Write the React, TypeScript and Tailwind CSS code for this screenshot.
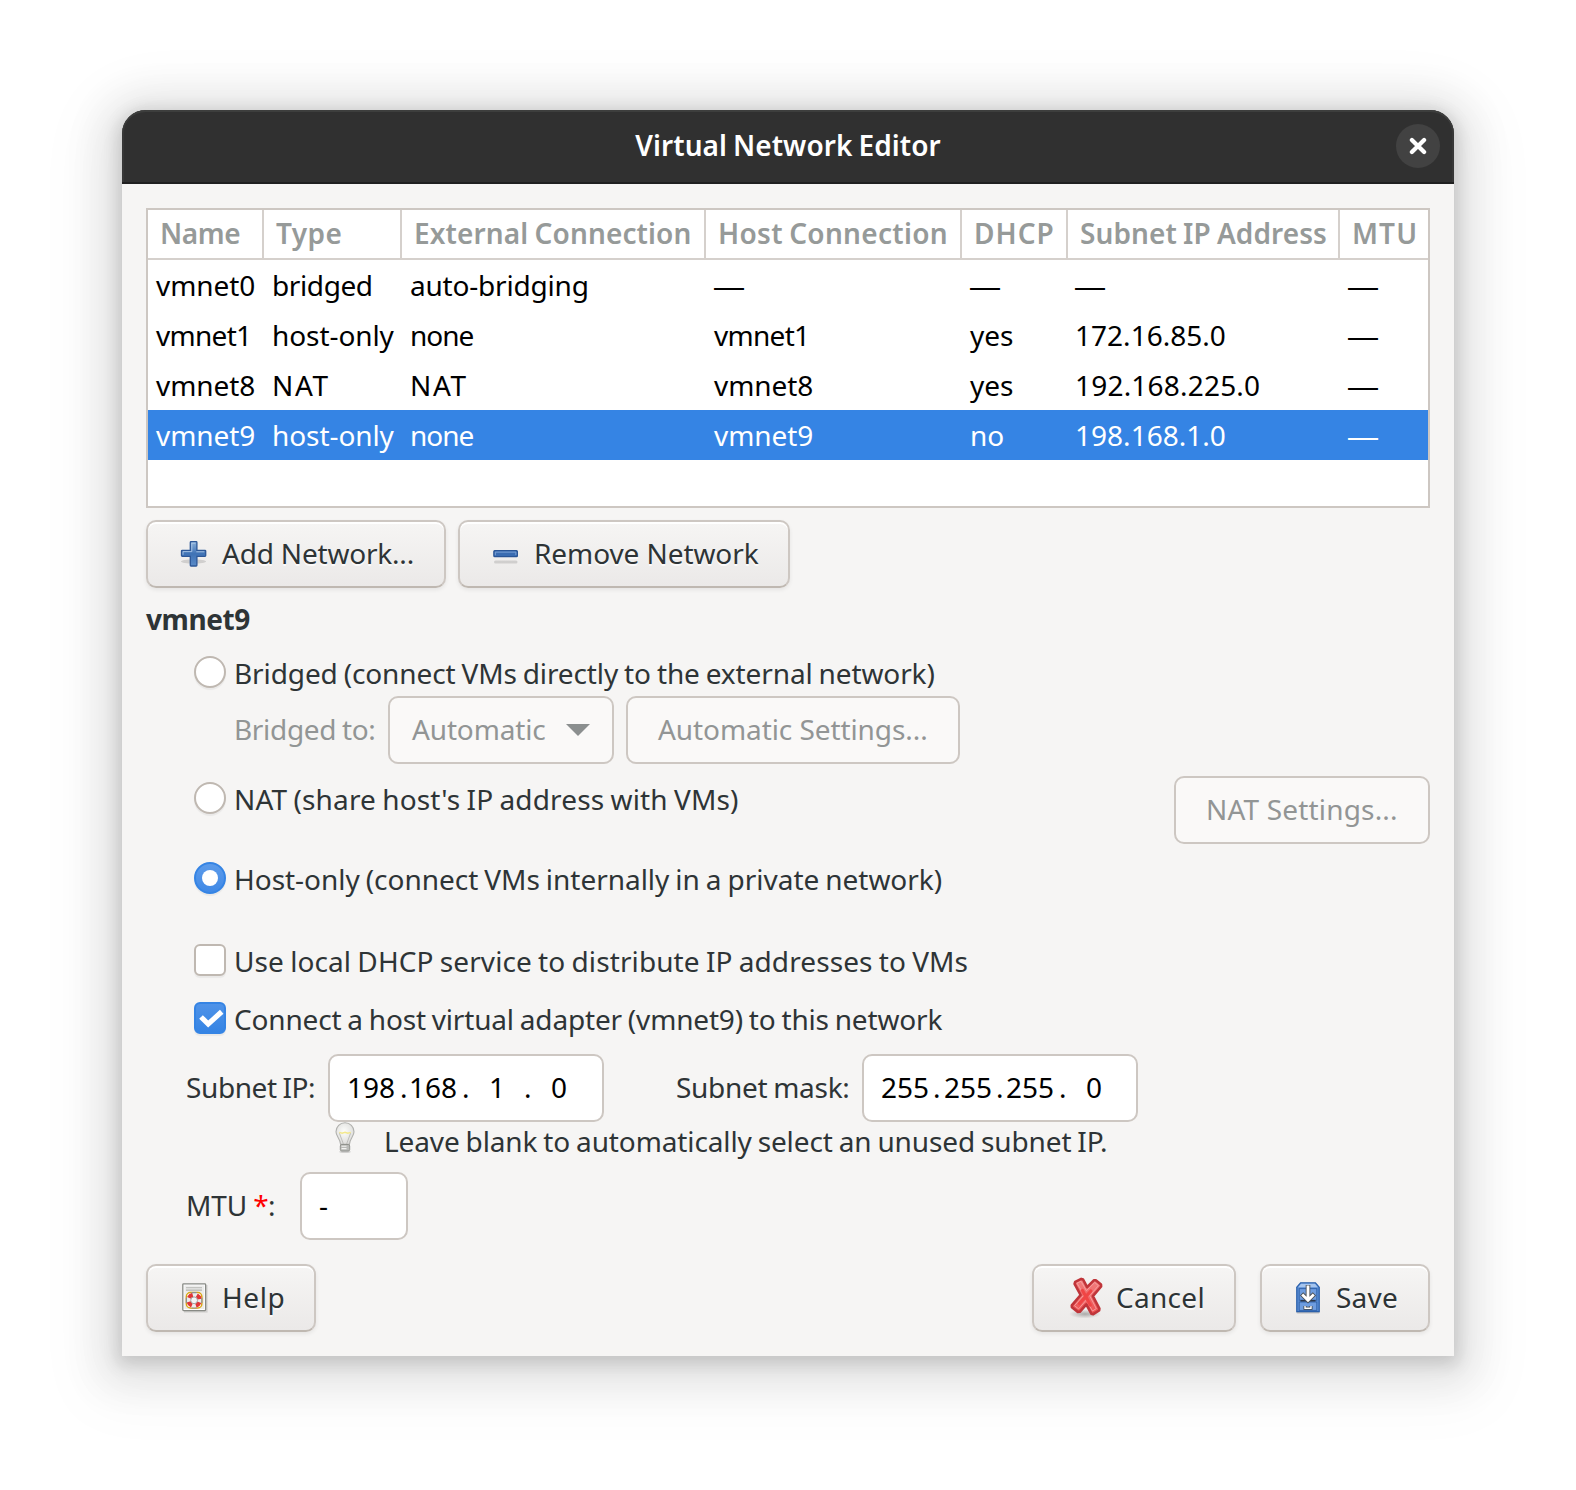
import type { ReactNode } from "react";

const cols = "grid grid-cols-[116px_138px_304px_256px_106px_272px_88px]";

const headers = [
  { text: "Name", cls: "pl-[12px] tracking-[-0.4px]" },
  { text: "Type", cls: "pl-[12px] tracking-[0.4px]" },
  { text: "External Connection", cls: "pl-[12px] tracking-[0.12px]" },
  { text: "Host Connection", cls: "pl-[12px] tracking-[0.3px]" },
  { text: "DHCP", cls: "pl-[12px] tracking-[1px]" },
  { text: "Subnet IP Address", cls: "pl-[12px] tracking-[0.08px]" },
  { text: "MTU", cls: "pl-[12px] tracking-[1.1px]" },
];

const pads = ["pl-[8px]", "pl-[8px]", "pl-[8px]", "pl-[8px]", "pl-[8px]", "pl-[7px]", "pl-[8px]"];

const networks = [
  ["vmnet0", "bridged", "auto-bridging", "—", "—", "—", "—"],
  ["vmnet1", "host-only", "none", "vmnet1", "yes", "172.16.85.0", "—"],
  ["vmnet8", "NAT", "NAT", "vmnet8", "yes", "192.168.225.0", "—"],
  ["vmnet9", "host-only", "none", "vmnet9", "no", "198.168.1.0", "—"],
];

function cellTracking(text: string) {
  if (text === "NAT") return "tracking-[1.6px]";
  if (text === "none") return "tracking-[-1px]";
  if (text === "vmnet1") return "tracking-[-0.7px]";
  if (text === "bridged") return "tracking-[-0.4px]";
  if (text === "auto-bridging") return "tracking-[-0.2px]";
  if (text.startsWith("192")) return "tracking-[0.2px]";
  if (text.includes(".")) return "tracking-[0.02px]";
  return "tracking-[-0.08px]";
}

function Cell({ text, pad }: { text: string; pad: string }) {
  if (text === "—")
    return (
      <span className={`${pad} font-['Liberation_Sans'] text-[30px] leading-[53px]`}>—</span>
    );
  return <span className={`${pad} ${cellTracking(text)}`}>{text}</span>;
}

function Button({ className, children }: { className: string; children: ReactNode }) {
  return (
    <button
      className={`flex h-[68px] items-center rounded-[10px] border-2 border-[#cdc7c2] border-b-[#bfb8b1] bg-linear-to-b from-[#f6f5f4] to-[#ebe9e8] text-left shadow-[inset_0_2px_0_#fff,0_2px_4px_rgba(0,0,0,0.07)] [text-shadow:0_2px_0_rgba(255,255,255,0.77)] ${className}`}
    >
      {children}
    </button>
  );
}

function DisabledButton({ className, children }: { className: string; children: ReactNode }) {
  return (
    <button
      disabled
      className={`flex h-[68px] items-center rounded-[10px] border-2 border-[#cdc7c2] bg-[#faf9f8] pb-[2px] text-left text-[#929595] ${className}`}
    >
      {children}
    </button>
  );
}

function Radio({ checked = false }: { checked?: boolean }) {
  return checked ? (
    <span className="mb-[2px] flex size-8 items-center justify-center rounded-full border-2 border-[#3584e4] bg-linear-to-b from-[#5c9bea] to-[#4089e6] shadow-[0_2px_1px_rgba(0,0,0,0.05)]">
      <span className="size-4 rounded-full bg-white" />
    </span>
  ) : (
    <span className="mb-[2px] size-8 rounded-full border-2 border-[#bfb8b1] bg-white shadow-[0_2px_1px_rgba(0,0,0,0.05)]" />
  );
}

function Check({ checked = false }: { checked?: boolean }) {
  return checked ? (
    <span className="mb-[2px] size-8 rounded-[6px] border-2 border-[#3584e4] bg-linear-to-b from-[#4f93e8] to-[#3584e4] shadow-[0_2px_1px_rgba(0,0,0,0.05)]">
      <svg viewBox="0 0 28 28" className="size-7">
        <path d="M5 13l7.200 7L25.700 7.800" fill="none" stroke="#fff" strokeWidth="5.2" />
      </svg>
    </span>
  ) : (
    <span className="mb-[2px] size-8 rounded-[6px] border-2 border-[#bfb8b1] bg-white shadow-[0_2px_1px_rgba(0,0,0,0.05)]" />
  );
}

function Option({ control, className, children }: { control: ReactNode; className: string; children: ReactNode }) {
  return (
    <label className={`flex h-10 items-center gap-2 pl-12 leading-10 ${className}`}>
      {control}
      {children}
    </label>
  );
}

function PlusIcon() {
  return (
    <svg viewBox="0 0 32 32" className="size-8 shrink-0">
      <defs>
        <linearGradient id="plus" x1="0" y1="0" x2="0" y2="1">
          <stop offset="0" stopColor="#8ab0da" />
          <stop offset="0.5" stopColor="#3f72b5" />
          <stop offset="1" stopColor="#5a8bc8" />
        </linearGradient>
      </defs>
      <ellipse cx="15.5" cy="23.5" rx="12.5" ry="2.2" fill="#000" opacity="0.13" />
      <path
        d="M13 3.7h5.2a.7.7 0 01.7.7v7.9h8.1a.7.7 0 01.7.7v4.6a.7.7 0 01-.7.7h-8.1v9a.7.7 0 01-.7.7H13a.7.7 0 01-.7-.7v-9H4.2a.7.7 0 01-.7-.7V13a.7.7 0 01.7-.7h8.1V4.4a.7.7 0 01.7-.7z"
        fill="url(#plus)"
        stroke="#2d5797"
        strokeWidth="1.3"
      />
      <path d="M13.8 5v8.6H5v3.2M17.4 5.2h-3.6M26.3 13.8h-8" fill="none" stroke="#b4cdea" strokeWidth="1" opacity="0.8" />
    </svg>
  );
}

function MinusIcon() {
  return (
    <svg viewBox="0 0 32 32" className="size-8 shrink-0">
      <rect x="4" y="22.5" width="23.5" height="3" rx="1.5" fill="#000" opacity="0.13" />
      <rect x="3.9" y="12.6" width="23.4" height="6" rx="0.8" fill="#3a6cb2" stroke="#2a5596" strokeWidth="1.4" />
      <path d="M5.3 17.3v-3.2h20.6v3" fill="none" stroke="#7ba2d6" strokeWidth="1" />
    </svg>
  );
}

function HelpIcon() {
  return (
    <svg viewBox="0 0 26 30" className="h-[30px] w-[26px] shrink-0">
      <rect x="2" y="2" width="23.6" height="27.6" fill="#000" opacity="0.12" />
      <rect x="0.8" y="0.8" width="22.8" height="26.8" rx="0.8" fill="#fff" stroke="#888a85" strokeWidth="1.3" />
      <rect x="2.4" y="2.4" width="19.6" height="23.6" fill="#ececeb" />
      <path d="M4 4.7h16M4 7.1h16" stroke="#b4b5b2" strokeWidth="1.1" />
      <rect x="4.400" y="9.600" width="15.400" height="15.400" rx="4" fill="#fff" stroke="#d9a514" strokeWidth="1.500" />
      <circle cx="12.1" cy="17.3" r="5.600" fill="none" stroke="#ededec" strokeWidth="4.400" />
      <circle
        cx="12.1"
        cy="17.3"
        r="5.600"
        fill="none"
        stroke="#e23636"
        strokeWidth="4.400"
        strokeDasharray="4.600 4.196"
        strokeDashoffset="-2.098"
      />
      <path d="M9.500 9.600h5.200M9.500 25h5.200M4.400 14.700v5.200M19.800 14.700v5.200" stroke="#8f908c" strokeWidth="1.200" />
      <circle cx="12.1" cy="17.3" r="3.4" fill="#f6f6f5" stroke="#9a9a98" strokeWidth="0.9" />
    </svg>
  );
}

function CancelIcon() {
  return (
    <svg viewBox="0 0 34 42" className="h-[42px] w-[34px] shrink-0">
      <defs>
        <radialGradient id="crossShade">
          <stop offset="0" stopColor="#000" stopOpacity="0.28" />
          <stop offset="1" stopColor="#000" stopOpacity="0" />
        </radialGradient>
        <linearGradient id="cross" gradientUnits="userSpaceOnUse" x1="0" y1="2" x2="0" y2="36">
          <stop offset="0" stopColor="#f18080" />
          <stop offset="1" stopColor="#ee5252" />
        </linearGradient>
      </defs>
      <ellipse cx="16" cy="37" rx="16" ry="4.500" fill="url(#crossShade)" />
      <path
        d="M6.200 4.800l6-2.900 1.900.6 4 7.700 6.700-6.900 2-.1 5.200 4.300.1 2-8.200 9.600 6.500 12.500-.3 1.900-5.800 3.700-2-.5-5-9.400-6.500 7.500-2 .1-5.900-4.600-.1-1.900 8.800-10.400-6-11.200z"
        fill="url(#cross)"
        stroke="#c0353a"
        strokeWidth="2.600"
        strokeLinejoin="round"
      />
      <path
        d="M8 6.200l4-1.900 5.400 9.400 8.300-8.200 3.700 3.100-8.700 10.200 6.600 12.800-3.800 2.400-6.200-11-7.700 8.900-4.100-3.200L15 17.900z"
        fill="none"
        stroke="#f6a3a3"
        strokeWidth="0.900"
        strokeLinejoin="round"
      />
      <path d="M13.500 13.500L21.300 28M21.800 14L10.500 26.500" fill="none" stroke="#f04545" strokeWidth="3.200" strokeLinecap="round" />
    </svg>
  );
}

function SaveIcon() {
  return (
    <svg viewBox="0 0 24 32" className="h-8 w-6 shrink-0">
      <rect x="0.5" y="29" width="23" height="2.4" rx="1" fill="#000" opacity="0.2" />
      <path d="M4.6.8h14.8l3.8 4.4v24.4H.8V5.2z" fill="#5b8fd6" stroke="#2b60ab" strokeWidth="1.3" />
      <path d="M5 1.8h14l2.8 3.4H2.2z" fill="#a6c5ee" />
      <rect x="3.2" y="6.6" width="17.6" height="11.6" fill="#6d9cdf" stroke="#3465ac" strokeWidth="1" />
      <rect x="3.2" y="20" width="17.6" height="8.4" fill="#6d9cdf" stroke="#3465ac" strokeWidth="1" />
      <path d="M4.500 18.800h15" stroke="#29303a" strokeWidth="1.300" />
      <path d="M9 24v2.300h6V24" fill="none" stroke="#3c4248" strokeWidth="3" />
      <path d="M9 24v2.300h6V24" fill="none" stroke="#fff" strokeWidth="1.400" />
      <path d="M12 3v13M5.6 11.8l6.4 6.4 6.4-6.4" fill="none" stroke="#4b5056" strokeWidth="4.600" />
      <path d="M12 3.6v13M6.2 12.4l5.8 5.8 5.8-5.8" fill="none" stroke="#fff" strokeWidth="2.8" />
    </svg>
  );
}

function BulbIcon() {
  return (
    <svg viewBox="0 0 20 32" className="h-8 w-5 shrink-0">
      <defs>
        <radialGradient id="glass" cx="0.45" cy="0.4" r="0.6">
          <stop offset="0" stopColor="#fdfdfb" />
          <stop offset="1" stopColor="#dcdcda" />
        </radialGradient>
      </defs>
      <ellipse cx="10" cy="29.8" rx="6" ry="1.3" fill="#000" opacity="0.15" />
      <path
        d="M10 .8a9 9 0 00-9 9c0 4.600 4 6.400 4.600 12.600h8.800C15 16.200 19 14.400 19 9.800a9 9 0 00-9-9z"
        fill="url(#glass)"
        stroke="#b0b0ad"
        strokeWidth="1.1"
      />
      <path d="M4.400 11.200l4 10.800M15.600 11.200l-4 10.800" stroke="#b9b9b5" strokeWidth="0.9" />
      <path d="M4.200 10.400l3 .9 2.800-.9 2.800.9 3-.9" fill="none" stroke="#f3e88b" strokeWidth="1.5" />
      <rect x="5.300" y="22.500" width="9.400" height="6.500" rx="1.500" fill="#b9bab7" stroke="#8b8d88" strokeWidth="0.9" />
      <path d="M6.500 24.300h5M6.500 26.600h5" stroke="#f2f2f0" strokeWidth="1.100" />
    </svg>
  );
}

export default function App() {
  return (
    <div className="flex h-[1490px] w-[1576px] bg-white pt-[110px] pl-[122px] font-['Noto_Sans',sans-serif] text-[28px] leading-[50px] whitespace-nowrap text-[#2e3436] [word-spacing:-1.2px]">
      <main className="h-[1246px] w-[1332px] rounded-t-[24px] bg-[#f6f5f4] shadow-[0_4px_16px_4px_rgba(0,0,0,0.13),0_6px_40px_20px_rgba(0,0,0,0.09),0_12px_64px_32px_rgba(0,0,0,0.04)]">
        <header className="grid h-[74px] grid-cols-[1fr_auto_1fr] items-center rounded-t-[24px] border-b-2 border-[#202020] bg-[#303030] shadow-[inset_0_2px_0_#3d3e3d,inset_2px_0_0_#373737,inset_-2px_0_0_#373737]">
          <span />
          <h1 className="pb-[2px] font-semibold tracking-[0.04px] text-white">Virtual Network Editor</h1>
          <button className="mr-[14px] flex size-11 items-center justify-center justify-self-end rounded-full bg-[#424242]">
            <svg viewBox="0 0 18 18" className="size-[18px]">
              <path d="M2.900 2.900l12.200 12.200M15.100 2.900L2.900 15.100" stroke="#fff" strokeWidth="4.200" strokeLinecap="round" />
            </svg>
          </button>
        </header>

        <div className="px-6 pt-6">
          <section className="h-[300px] border-2 border-[#cdc7c2] bg-white">
            <div className={`${cols} h-[50px] border-b-2 border-[#d5d0cc] leading-[47px] font-semibold text-[#969a99]`}>
              {headers.map((h) => (
                <span key={h.text} className={`border-r-2 border-[#d5d0cc] last:border-r-0 ${h.cls}`}>
                  {h.text}
                </span>
              ))}
            </div>
            {networks.map((row) => (
              <div
                key={row[0]}
                className={`${cols} h-[50px] ${row[0] === "vmnet9" ? "bg-[#3584e4] text-white" : "text-black"}`}
              >
                {row.map((text, i) => (
                  <Cell key={i} text={text} pad={pads[i]} />
                ))}
              </div>
            ))}
          </section>

          <div className="mt-3 flex gap-3">
            <Button className="w-[300px] gap-3 pl-[30px]">
              <PlusIcon />
              <span className="pb-[2px] tracking-[-0.2px]">Add Network...</span>
            </Button>
            <Button className="w-[332px] gap-3 pl-[30px]">
              <MinusIcon />
              <span className="pb-[2px] tracking-[-0.08px]">Remove Network</span>
            </Button>
          </div>

          <h2 className="mt-[6px] font-bold tracking-[-0.4px]">vmnet9</h2>

          <Option control={<Radio />} className="mt-[9px]">
            <span className="tracking-[-0.11px]">Bridged (connect VMs directly to the external network)</span>
          </Option>
          <div className="mt-[3px] flex pl-[88px] text-[#929595]">
            <span className="w-[154px] pt-2 tracking-[-0.33px]">Bridged to:</span>
            <DisabledButton className="w-[226px] pl-[22px]">
              <span className="w-[154px] tracking-[-0.15px]">Automatic</span>
              <svg viewBox="0 0 24 12" className="mt-[2px] h-3 w-6">
                <path d="M0 0h24L12 12z" fill="#8b8f8f" />
              </svg>
            </DisabledButton>
            <DisabledButton className="ml-3 w-[334px] pl-[30px]">
              <span className="tracking-[-0.08px]">Automatic Settings...</span>
            </DisabledButton>
          </div>

          <div className="mt-3 flex items-start justify-between">
            <Option control={<Radio />} className="mt-[3px]">
              <span className="tracking-[0.15px]">NAT (share host's IP address with VMs)</span>
            </Option>
            <DisabledButton className="w-[256px] pl-[30px]">
              <span className="tracking-[0.17px]">NAT Settings...</span>
            </DisabledButton>
          </div>

          <Option control={<Radio checked />} className="mt-[15px]">
            <span className="tracking-[-0.03px]">Host-only (connect VMs internally in a private network)</span>
          </Option>
          <Option control={<Check />} className="mt-[42px]">
            <span className="tracking-[0.1px]">Use local DHCP service to distribute IP addresses to VMs</span>
          </Option>
          <Option control={<Check checked />} className="mt-[18px]">
            <span className="tracking-[-0.17px]">Connect a host virtual adapter (vmnet9) to this network</span>
          </Option>

          <div className="mt-[15px] flex pl-10">
            <span className="w-[142px] pt-2 tracking-[-0.4px]">Subnet IP:</span>
            <div className="flex h-[68px] w-[276px] rounded-[10px] border-2 border-[#cdc7c2] bg-white pt-[6px] pl-[17px] text-black">
              <span className="w-[53px]">198</span>
              <span className="w-[9px]">.</span>
              <span className="w-[53px]">168</span>
              <span className="w-[27px]">.</span>
              <span className="w-[35px]">1</span>
              <span className="w-[27px]">.</span>
              <span>0</span>
            </div>
            <span className="ml-[72px] w-[186px] pt-2 tracking-[-0.28px]">Subnet mask:</span>
            <div className="flex h-[68px] w-[276px] rounded-[10px] border-2 border-[#cdc7c2] bg-white pt-[6px] pl-[17px] text-black">
              <span className="w-[52px]">255</span>
              <span className="w-[11px]">.</span>
              <span className="w-[52px]">255</span>
              <span className="w-[10px]">.</span>
              <span className="w-[53px]">255</span>
              <span className="w-[27px]">.</span>
              <span>0</span>
            </div>
          </div>

          <div className="flex h-[50px] items-start pl-[189px]">
            <BulbIcon />
            <span className="-mt-px ml-[29px] leading-10 tracking-[-0.12px]">
              Leave blank to automatically select an unused subnet IP.
            </span>
          </div>

          <div className="flex pl-10">
            <span className="w-[114px] pt-2">
              <span className="tracking-[-0.1px]">MTU </span>
              <span className="tracking-[-0.6px] text-[#ff0000]">*</span>:
            </span>
            <div className="h-[68px] w-[108px] rounded-[10px] border-2 border-[#cdc7c2] bg-white pt-[6px] pl-[17px] text-black">-</div>
          </div>

          <div className="mt-6 flex">
            <Button className="w-[170px] gap-[14px] pl-[34px]">
              <HelpIcon />
              <span className="pb-[2px] tracking-[0.6px]">Help</span>
            </Button>
            <Button className="mr-6 ml-auto w-[204px] gap-[13px] pl-[35px]">
              <CancelIcon />
              <span className="pb-[2px] tracking-[0.3px]">Cancel</span>
            </Button>
            <Button className="w-[170px] gap-4 pl-[34px]">
              <SaveIcon />
              <span className="pb-[2px] tracking-[0.2px]">Save</span>
            </Button>
          </div>
        </div>
      </main>
    </div>
  );
}
